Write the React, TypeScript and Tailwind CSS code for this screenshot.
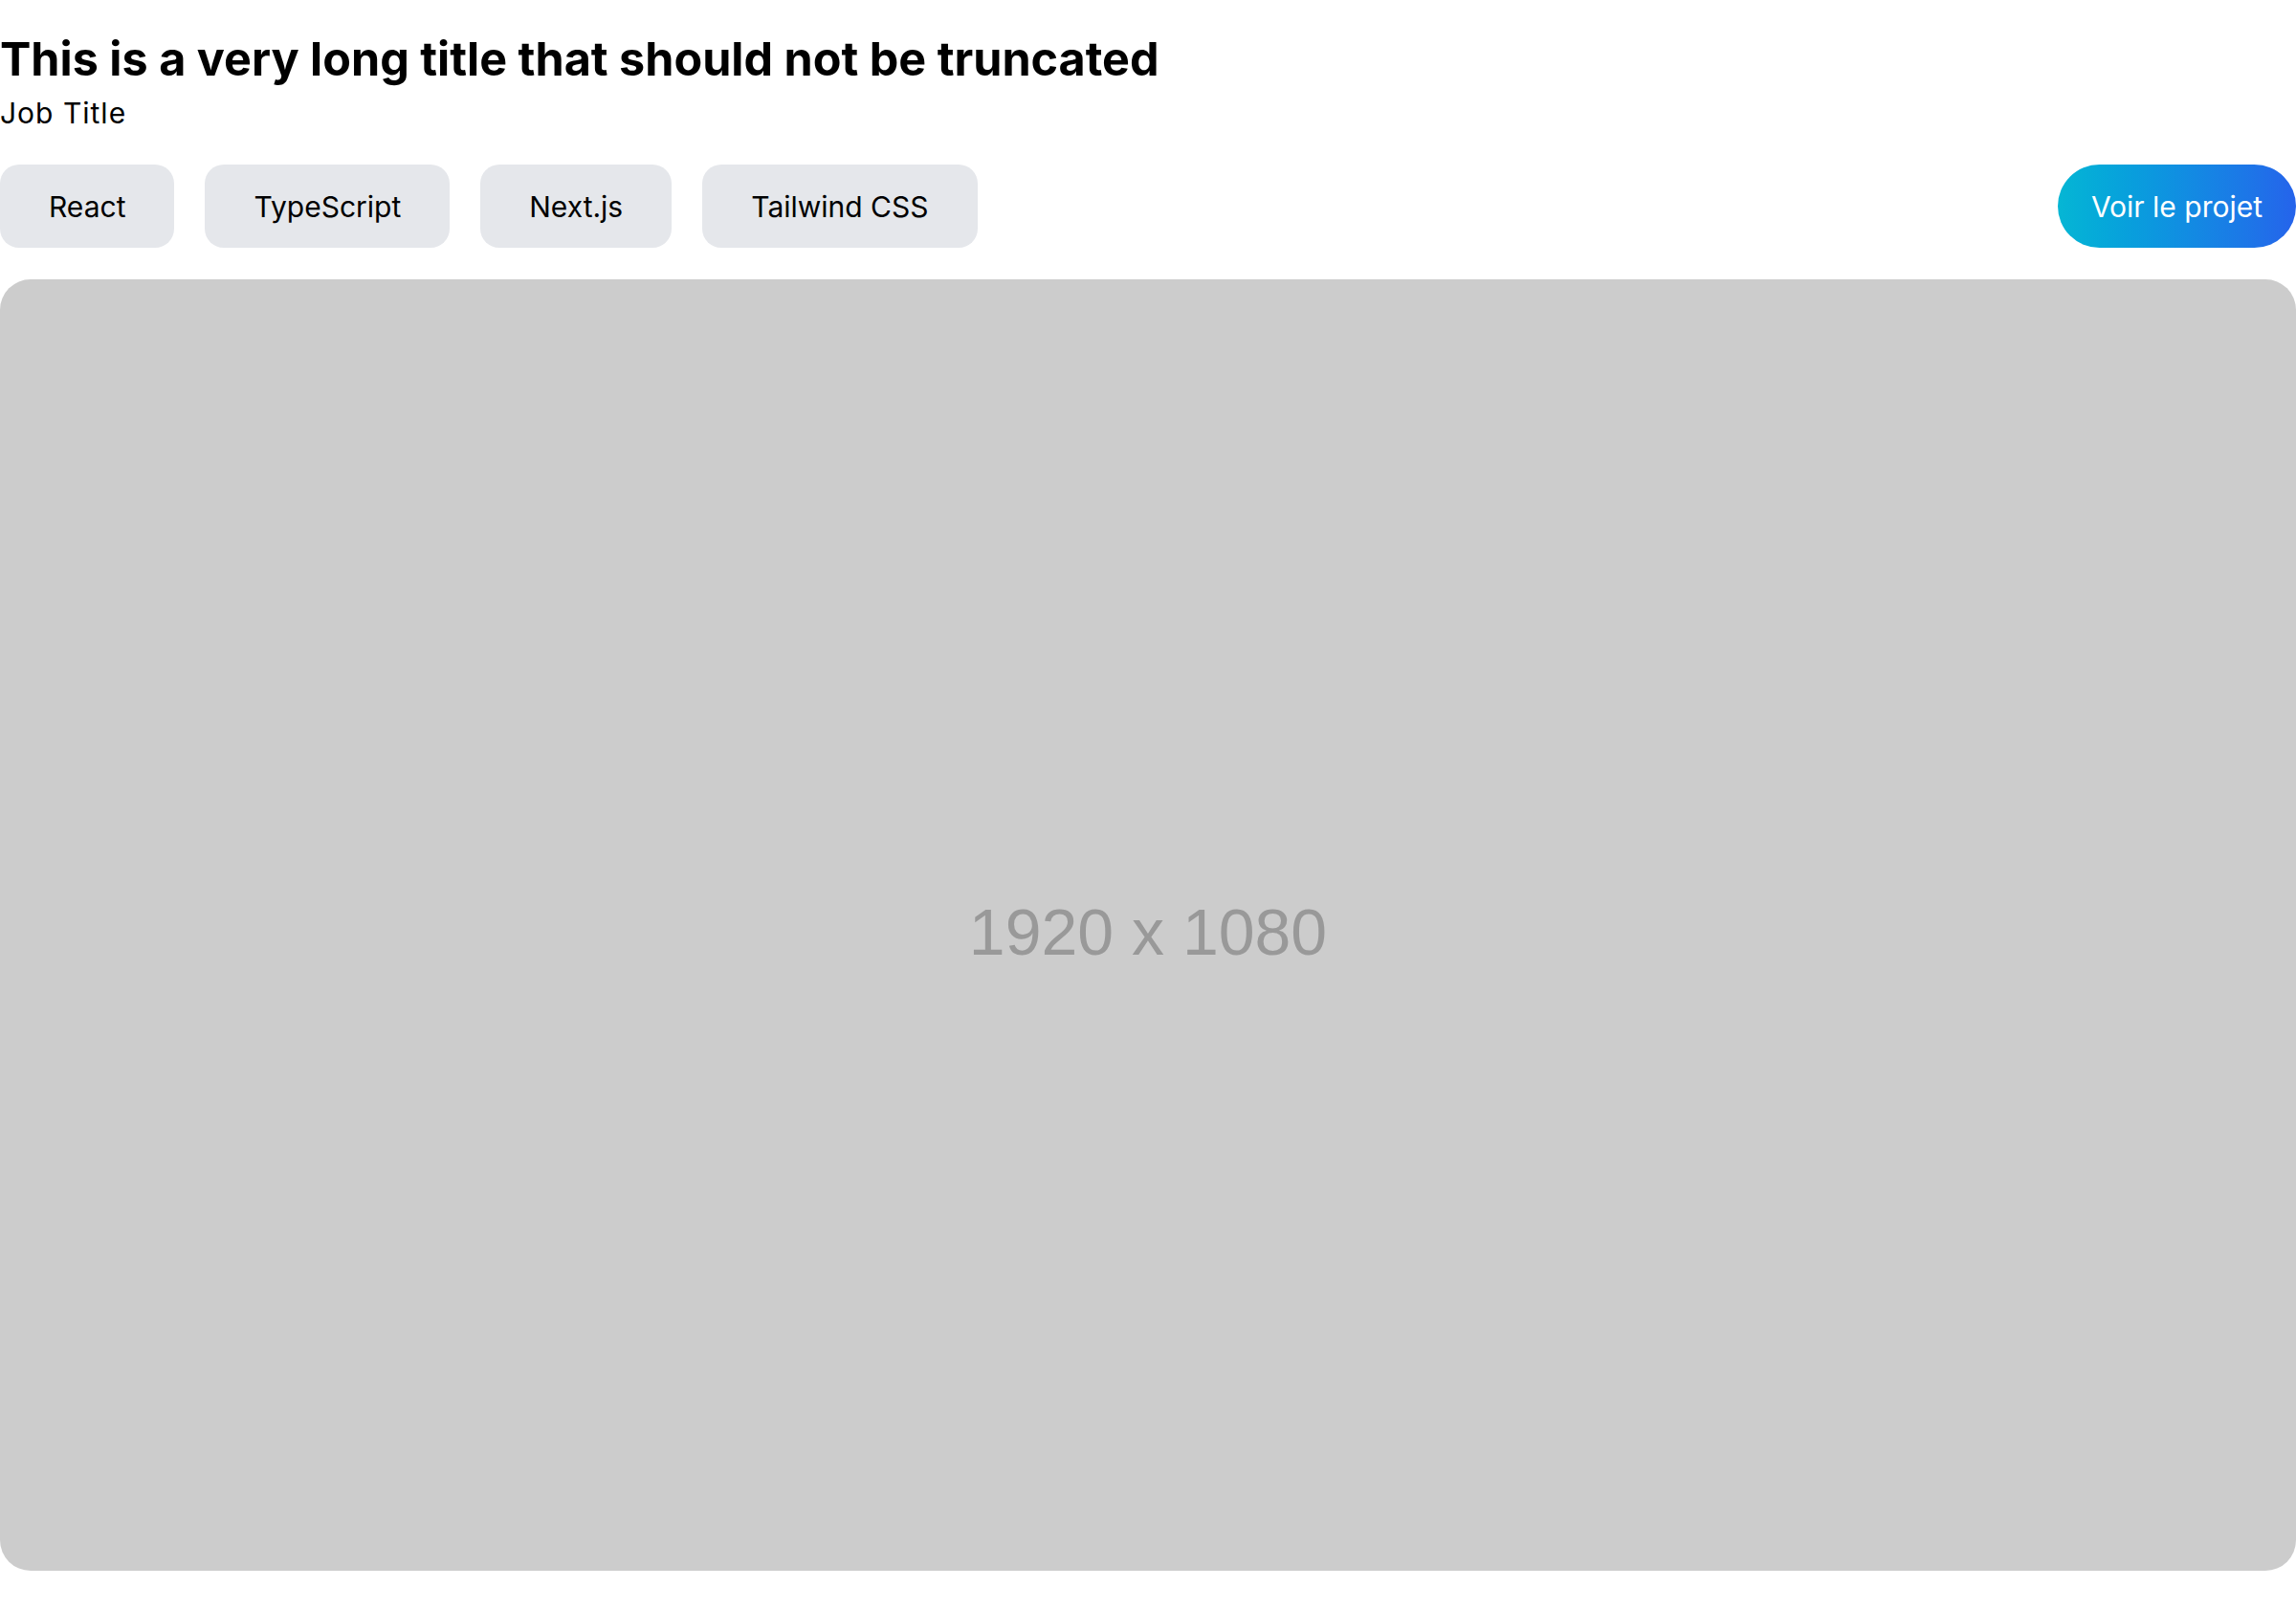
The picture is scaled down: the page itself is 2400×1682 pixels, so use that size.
import React from "react";

const tags = ["React", "TypeScript", "Next.js", "Tailwind CSS"];

export default function App() {
  return (
    <div className="w-full bg-white font-['Inter',sans-serif] text-black">
      <div className="pt-[32px]">
        <h1 className="text-[48.5px] leading-[60px] font-bold">
          This is a very long title that should not be truncated
        </h1>
        <p className="mt-[8px] text-[30px] leading-[36px] tracking-[1px]">Job Title</p>
      </div>
      <div className="mt-[36px] flex items-center justify-between">
        <div className="flex gap-[32px]">
          {tags.map((t) => (
            <span
              key={t}
              className="flex h-[87px] items-center rounded-[20px] bg-[#e5e7eb] px-[51px] pt-[2px] text-[30px]"
            >
              {t}
            </span>
          ))}
        </div>
        <a
          href="#"
          className="flex h-[87px] items-center rounded-full bg-gradient-to-r from-[#06b6d4] to-[#2563eb] px-[35px] pt-[2px] text-[30px] text-white"
        >
          Voir le projet
        </a>
      </div>
      <div className="mt-[33px] flex aspect-video w-full items-center justify-center rounded-[32px] bg-[#cccccc]">
        <span className="pt-[13px] font-['Liberation_Sans',Arial,sans-serif] text-[68px] leading-none text-[#999999]">
          1920 x 1080
        </span>
      </div>
    </div>
  );
}
